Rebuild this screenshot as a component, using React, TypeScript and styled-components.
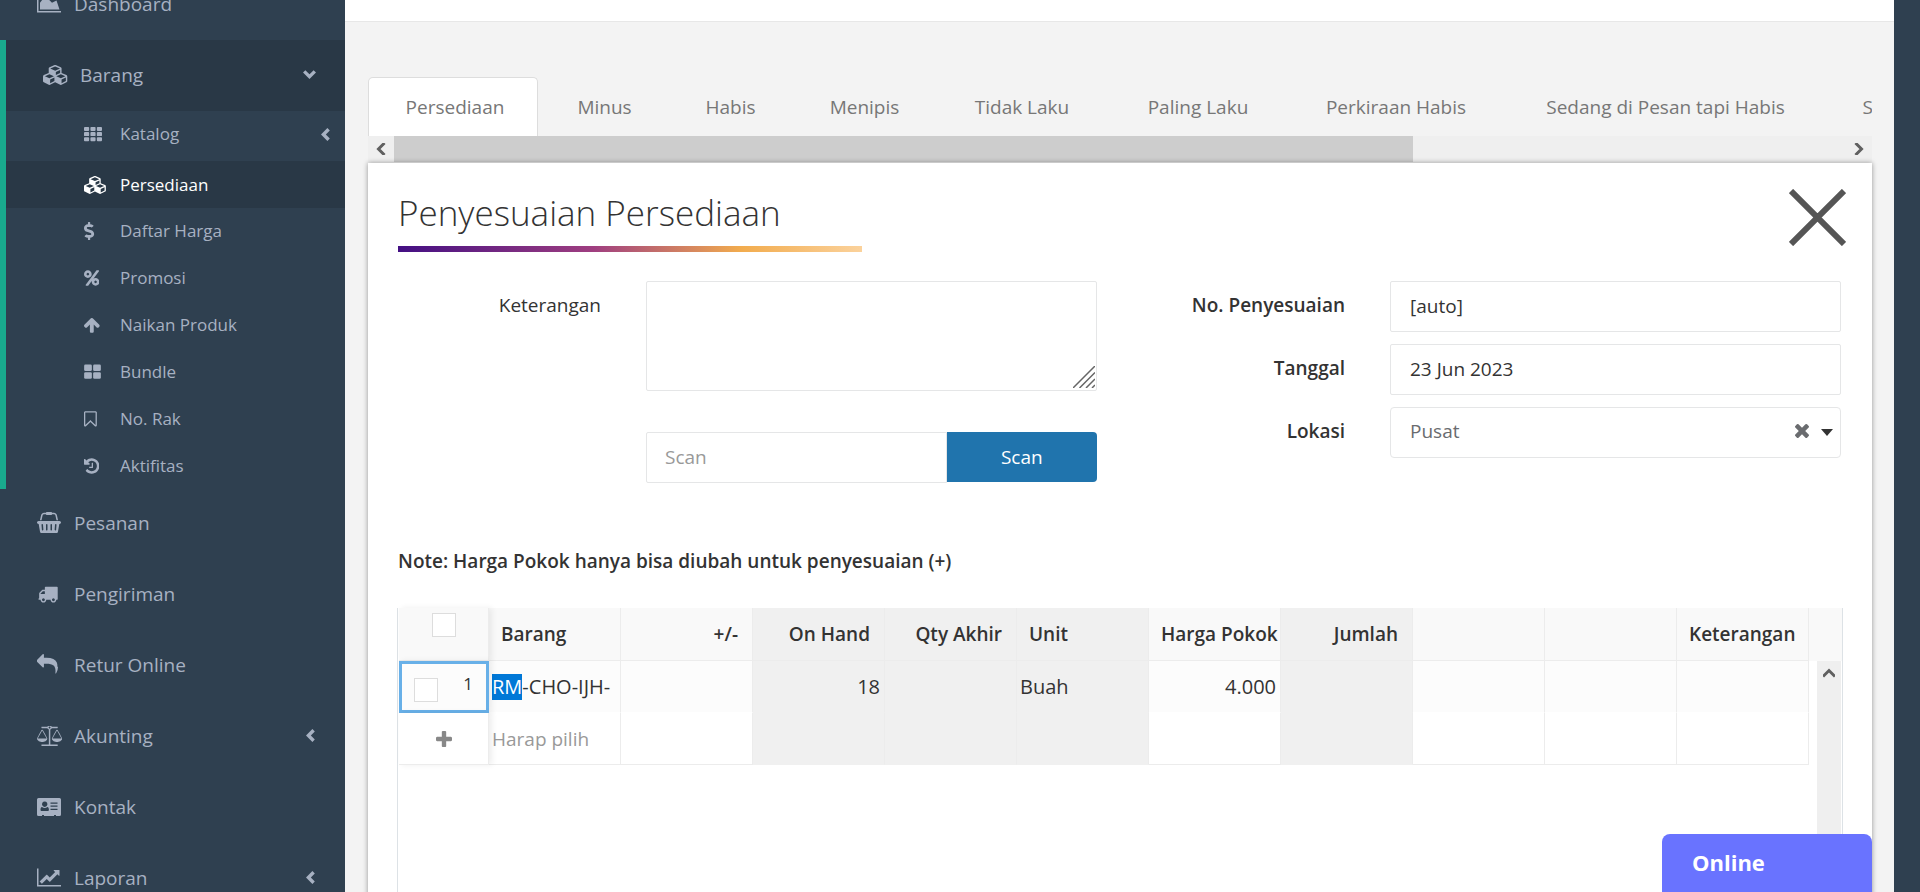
import React from 'react';
import styled, { createGlobalStyle, css } from 'styled-components';
import { FaDollarSign } from 'react-icons/fa';

const GlobalStyle = createGlobalStyle`
  *, *::before, *::after { box-sizing: border-box; }
  body { margin: 0; background: #2f4050; }
  body, button, input, textarea, select {
    font-family: "Open Sans", "Noto Sans", sans-serif;
    font-size: 19px;
    line-height: 26px;
    color: #333;
  }
  button { padding: 0; border: 0; background: none; cursor: pointer; }
  a { color: inherit; text-decoration: none; }
  ul { margin: 0; padding: 0; list-style: none; }
`;

/* ---------- icons ---------- */

type GlyphProps = { d: string; x?: number; y?: number; w: number; h?: number; size: number };
const Svg = styled.svg`
  display: block;
  flex: none;
  fill: currentColor;
`;
const Glyph = ({ d, x = 0, y = 0, w, h = 1792, size }: GlyphProps) => (
  <Svg viewBox={`${x} ${y} ${w} ${h}`} width={(w / h) * size} height={size} aria-hidden="true">
    <path d={d} />
  </Svg>
);

const CUBES =
  'M640 1632l384-192v-314l-384 164v342zm-64-454l404-173-404-173-404 173zm1088 454l384-192v-314l-384 164v342zm-64-454l404-173-404-173-404 173zm-448-293l384-165v-266l-384 164v267zm-64-379l441-189-441-189-441 189zm1088 518v416q0 36-19 67t-52 47l-448 224q-25 14-57 14t-57-14l-448-224q-4-2-7-4-2 2-7 4l-448 224q-25 14-57 14t-57-14l-448-224q-33-16-52-47t-19-67v-416q0-38 21.5-70t56.5-48l434-186v-400q0-38 21.5-70t56.5-48l448-192q23-10 50-10t50 10l448 192q35 16 56.5 48t21.5 70v400l434 186q36 16 57 48t21 70z';
const AREA = 'M2048 1536v128h-2048v-1536h128v1408h1920zM1664 640l256 768h-1664v-576l448-576 576 576z';
const LINE =
  'M2048 1536v128h-2048v-1536h128v1408h1920zm-128-1248v435q0 21-19.5 29t-35.5-8l-121-121-633 633q-10 10-23 10t-23-10l-233-233-416 416-192-192 585-585q10-10 23-10t23 10l233 233 464-464-121-121q-16-16-8-35.5t29-19.5h435q14 0 23 9t9 23z';
const PERCENT =
  'M1408 1280q0-52-38-90t-90-38-90 38-38 90 38 90 90 38 90-38 38-90zm-768-768q0-52-38-90t-90-38-90 38-38 90 38 90 90 38 90-38 38-90zm1024 768q0 159-112.5 271.5t-271.5 112.5-271.5-112.5-112.5-271.5 112.5-271.5 271.5-112.5 271.5 112.5 112.5 271.5zm-32-1088q0 20-13 38l-1056 1408q-19 26-51 26h-160q-26 0-45-19t-19-45q0-20 13-38l1056-1408q19-26 51-26h160q26 0 45 19t19 45zm-736 320q0 159-112.5 271.5t-271.5 112.5-271.5-112.5-112.5-271.5 112.5-271.5 271.5-112.5 271.5 112.5 112.5 271.5z';
const ARROW_UP =
  'M1675 971q0 51-37 90l-75 75q-38 38-91 38-54 0-90-38l-294-293v704q0 52-37.5 84.5t-90.5 32.5h-128q-53 0-90.5-32.5t-37.5-84.5v-704l-294 293q-36 38-90 38t-90-38l-75-75q-38-38-38-90 0-53 38-91l651-651q35-37 90-37 54 0 91 37l651 651q37 39 37 91z';
const BOOKMARK =
  'M1408 256h-1024v1242l423-406 89-85 89 85 423 406v-1242zm12-128q23 0 44 9 33 13 52.5 41t19.5 62v1289q0 34-19.5 62t-52.5 41q-19 8-44 8-48 0-83-32l-441-424-441 424q-36 33-83 33-23 0-44-9-33-13-52.5-41t-19.5-62v-1289q0-34 19.5-62t52.5-41q21-9 44-9h1048z';
const HISTORY =
  'M1664 896q0 156-61 298t-164 245-245 164-298 61q-172 0-327-72.5t-264-204.5q-7-10-6.5-22.5t8.5-20.5l137-138q10-9 25-9 16 2 23 12 73 95 179 147t225 52q104 0 198.5-40.5t163.5-109.5 109.5-163.5 40.5-198.5-40.5-198.5-109.5-163.5-163.5-109.5-198.5-40.5q-98 0-188 35.5t-160 101.5l137 138q31 30 14 69-17 40-59 40h-448q-26 0-45-19t-19-45v-448q0-42 40-59 39-17 69 14l130 129q107-101 244.5-156.5t284.5-55.5q156 0 298 61t245 164 164 245 61 298zm-640-288v448q0 14-9 23t-23 9h-320q-14 0-23-9t-9-23v-64q0-14 9-23t23-9h224v-352q0-14 9-23t23-9h64q14 0 23 9t9 23z';
const BASKET =
  'M1920 768q53 0 90.5 37.5t37.5 90.5-37.5 90.5-90.5 37.5h-15l-115 662q-8 46-44 76t-82 30h-1280q-46 0-82-30t-44-76l-115-662h-15q-53 0-90.5-37.5t-37.5-90.5 37.5-90.5 90.5-37.5h1792zm-1435 800q26-2 43.5-22.5t15.5-46.5l-32-416q-2-26-22.5-43.5t-46.5-15.5-43.5 22.5-15.5 46.5l32 416q2 25 20.5 42t43.5 17h5zm411-64v-416q0-26-19-45t-45-19-45 19-19 45v416q0 26 19 45t45 19 45-19 19-45zm384 0v-416q0-26-19-45t-45-19-45 19-19 45v416q0 26 19 45t45 19 45-19 19-45zm352 5l32-416q2-26-15.5-46.5t-43.5-22.5-46.5 15.5-22.5 43.5l-32 416q-2 26 15.5 46.5t43.5 22.5h5q25 0 43.5-17t20.5-42zm-1156-1217l-93 412h-132l101-441q19-88 89-143.5t160-55.5h167q0-26 19-45t45-19h384q26 0 45 19t19 45h167q90 0 160 55.5t89 143.5l101 441h-132l-93-412q-11-44-45.5-72t-79.5-28h-167q0 26-19 45t-45 19h-384q-26 0-45-19t-19-45h-167q-45 0-79.5 28t-45.5 72z';
const TRUCK =
  'M640 1408q0-52-38-90t-90-38-90 38-38 90 38 90 90 38 90-38 38-90zm-384-512h384v-256h-158q-13 0-22 9l-195 195q-9 9-9 22v30zm1280 512q0-52-38-90t-90-38-90 38-38 90 38 90 90 38 90-38 38-90zm256-1088v1024q0 15-4 26.5t-13.5 18.5-16.5 11.5-23.5 6-22.5 2-25.5 0-22.5-.5q0 106-75 181t-181 75-181-75-75-181h-384q0 106-75 181t-181 75-181-75-75-181h-64q-3 0-22.5.5t-25.5 0-22.5-2-23.5-6-16.5-11.5-13.5-18.5-4-26.5q0-26 19-45t45-19v-320q0-8-.5-35t0-38 2.5-34.5 6.5-37 14-30.5 22.5-30l198-198q19-19 50.5-32t58.5-13h160v-192q0-26 19-45t45-19h1024q26 0 45 19t19 45z';
const REPLY =
  'M1792 1120q0 166-127 451-3 7-10.5 24t-13.5 30-13 22q-12 17-28 17-15 0-23.5-10t-8.5-25q0-9 2.5-26.5t2.5-23.5q5-68 5-123 0-112-19.5-200.5t-54-153.5-89-112-115-78-142.5-47-161.5-24-181.5-7h-224v256q0 26-19 45t-45 19-45-19l-512-512q-19-19-19-45t19-45l512-512q19-19 45-19t45 19 19 45v256h224q713 0 875 403 53 134 53 333z';
const BALANCE =
  'M1728 576l-384 704h768zm-1280 0l-384 704h768zm821-192q-14 40-45.5 71.5t-71.5 45.5v1291h608q14 0 23 9t9 23v64q0 14-9 23t-23 9h-1344q-14 0-23-9t-9-23v-64q0-14 9-23t23-9h608v-1291q-40-14-71.5-45.5t-45.5-71.5h-491q-14 0-23-9t-9-23v-64q0-14 9-23t23-9h491q21-57 70-92.5t111-35.5 111 35.5 70 92.5h491q14 0 23 9t9 23v64q0 14-9 23t-23 9h-491zm-181 16q33 0 56.5-23.5t23.5-56.5-23.5-56.5-56.5-23.5-56.5 23.5-23.5 56.5 23.5 56.5 56.5 23.5zm1088 880q0 73-46.5 131t-117.5 91-144.5 49.5-139.5 16.5-139.5-16.5-144.5-49.5-117.5-91-46.5-131q0-11 35-81t92-174.5 107-195.5 102-184 56-100q18-33 56-33t56 33q4 7 56 100t102 184 107 195.5 92 174.5 35 81zm-1280 0q0 73-46.5 131t-117.5 91-144.5 49.5-139.5 16.5-139.5-16.5-144.5-49.5-117.5-91-46.5-131q0-11 35-81t92-174.5 107-195.5 102-184 56-100q18-33 56-33t56 33q4 7 56 100t102 184 107 195.5 92 174.5 35 81z';
const TIMES =
  'M1490 1322q0 40-28 68l-136 136q-28 28-68 28t-68-28l-294-294-294 294q-28 28-68 28t-68-28l-136-136q-28-28-28-68t28-68l294-294-294-294q-28-28-28-68t28-68l136-136q28-28 68-28t68 28l294 294 294-294q28-28 68-28t68 28l136 136q28 28 28 68t-28 68l-294 294 294 294q28 28 28 68z';
const PLUS =
  'M1600 736v192q0 40-28 68t-68 28h-416v416q0 40-28 68t-68 28h-192q-40 0-68-28t-28-68v-416h-416q-40 0-68-28t-28-68v-192q0-40 28-68t68-28h416v-416q0-40 28-68t68-28h192q40 0 68 28t28 68v416h416q40 0 68 28t28 68z';

const TilesIcon = () => (
  <Svg viewBox="0 0 1792 1792" width="18" height="18" aria-hidden="true">
    {[192, 704, 1216].map((y) =>
      [0, 640, 1280].map((x) => <rect key={`${x}-${y}`} x={x} y={y} width="512" height="400" rx="90" />),
    )}
  </Svg>
);
const LargeTilesIcon = () => (
  <Svg viewBox="0 0 1664 1792" width="17" height="18" aria-hidden="true">
    {[160, 928].map((y) => [0, 896].map((x) => <rect key={`${x}-${y}`} x={x} y={y} width="768" height="640" rx="128" />))}
  </Svg>
);
const CardIcon = () => (
  <Svg viewBox="0 0 24 18" width="24" height="18" aria-hidden="true">
    <path
      fillRule="evenodd"
      d="M1.5 0h21A1.5 1.5 0 0 1 24 1.500v15a1.500 1.500 0 0 1-1.500 1.500H19v-1h-2v1H7v-1H5v1H1.500A1.500 1.500 0 0 1 0 16.500v-15A1.500 1.500 0 0 1 1.500 0zM5 9C3.900 9 3.500 10.500 3.500 11.800c0 .8.500 1.300 1.200 1.300h6c.7 0 1.200-.5 1.200-1.300C11.900 10.500 11.500 9 10.400 9c-1.600 1.300-3.800 1.300-5.400 0zM7.700 3.400a2.700 2.800 0 1 0 .01 0zM13.500 4.500h7v1.200h-7zM13.500 7.600h7v1.200h-7zM13.500 10.800h7V12h-7z"
    />
  </Svg>
);

const Stroke = styled.svg`
  display: block;
  flex: none;
  fill: none;
  stroke: currentColor;
`;
const Chevron = ({ down }: { down?: boolean }) =>
  down ? (
    <Stroke viewBox="0 0 13 9" width="13" height="9" strokeWidth="3.400" aria-hidden="true">
      <path d="M1.200 1.400 6.500 6.600l5.300-5.200" />
    </Stroke>
  ) : (
    <Stroke viewBox="0 0 9 13" width="9" height="13" strokeWidth="3.400" aria-hidden="true">
      <path d="M7.600 1.200 2.400 6.500l5.200 5.300" />
    </Stroke>
  );
const ScrollArrow = styled(Stroke)<{ $turn: number }>`
  stroke: #606060;
  transform: rotate(${(p) => p.$turn}deg);
`;
const Arrow = ({ turn }: { turn: number }) => (
  <ScrollArrow $turn={turn} viewBox="0 0 12 12" width="12" height="12" strokeWidth="3" aria-hidden="true">
    <path d="M9.500 0 3.500 6l6 6" />
  </ScrollArrow>
);

/* ---------- page frame ---------- */

const Shell = styled.div`
  display: flex;
  height: 100vh;
  overflow: hidden;
  background: #2f4050;
`;
const Sidebar = styled.nav`
  flex: 0 0 345px;
  overflow: hidden;
  color: #a7b1c2;
`;
const Menu = styled.ul`
  margin-top: -31px;
`;
const MenuGroup = styled.li<{ $open?: boolean }>`
  ${(p) => p.$open && css`border-left: 6px solid #19aa8d;`}
`;
const MenuLink = styled.a<{ $open?: boolean }>`
  display: grid;
  grid-template-columns: 37px 1fr auto;
  align-items: center;
  height: 71px;
  padding: 0 30px 2px 37px;
  background: ${(p) => (p.$open ? '#293846' : 'transparent')};
  ${(p) => p.$open && css`padding-right: 29px;`}
`;
const SubMenu = styled.ul`
  display: grid;
  grid-template-rows: 50px 47px repeat(6, 1fr);
  height: 378px;
  margin-bottom: -1px;
`;
const SubLink = styled.a<{ $active?: boolean; $nested?: boolean }>`
  display: grid;
  grid-template-columns: 36px 1fr auto;
  align-items: center;
  height: 100%;
  padding: 0 15px ${(p) => (p.$nested ? 4 : 0)}px 78px;
  font-size: 17px;
  color: ${(p) => (p.$active ? '#fff' : 'inherit')};
  background: ${(p) => (p.$active ? '#293846' : 'transparent')};
`;
const Main = styled.main`
  flex: 1;
  min-width: 0;
  display: flex;
  flex-direction: column;
  margin-right: 26px;
  background: #f3f3f3;
`;
const TopBar = styled.header`
  flex: none;
  height: 22px;
  background: #fff;
  border-bottom: 1px solid #e7e7e7;
`;
const Content = styled.div`
  flex: 1;
  display: flex;
  flex-direction: column;
  padding: 55px 22px 0 23px;
`;

/* ---------- tabs ---------- */

const Tabs = styled.div`
  display: flex;
  flex: none;
  height: 59px;
  overflow: hidden;
`;
const Tab = styled.button<{ $width: number; $active?: boolean }>`
  flex: 0 0 ${(p) => p.$width}px;
  color: #777;
  white-space: nowrap;
  ${(p) =>
    p.$active &&
    css`
      margin-right: 3px;
      padding-left: 4px;
      background: #fff;
      border: 1px solid #ddd;
      border-bottom: 0;
      border-radius: 5px 5px 0 0;
    `}
`;
const TabScroll = styled.div`
  display: flex;
  flex: none;
  height: 26px;
  background: #efefef;
`;
const ScrollButton = styled.button`
  display: grid;
  flex: none;
  place-items: center;
  width: 26px;
`;
const ScrollTrack = styled.div`
  flex: 1;
  display: flex;
`;
const ScrollThumb = styled.div`
  width: 70.2%;
  background: #cdcdcd;
`;

/* ---------- panel ---------- */

const Panel = styled.section`
  flex: 1;
  margin-top: 1px;
  padding: 24px 31px 0 30px;
  background: #fff;
  box-shadow: 0 0 5px rgba(0, 0, 0, 0.4);
`;
const PanelHead = styled.div`
  display: flex;
  justify-content: space-between;
  align-items: flex-start;
  margin-bottom: 29px;
`;
const Title = styled.h1`
  width: 464px;
  margin: 0;
  font-size: 35px;
  font-weight: 300;
  line-height: 52px;
  &::after {
    content: '';
    display: block;
    height: 6px;
    margin-top: 7px;
    background: linear-gradient(90deg, #430f83 0%, #9f3e80 42%, #f2ac4e 74%, #fbd29c 100%);
  }
`;
const CloseButton = styled.button`
  margin: 2px -5px 0 0;
  color: #555;
`;
const Form = styled.form`
  display: grid;
  grid-template-columns: 1fr 1fr;
  column-gap: 45px;
`;
const FormColumn = styled.div<{ $gap: number }>`
  display: grid;
  grid-template-columns: 203fr 451fr;
  column-gap: 45px;
  row-gap: ${(p) => p.$gap}px;
  align-content: start;
`;
const Label = styled.label<{ $bold?: boolean }>`
  padding-top: 11px;
  text-align: right;
  font-weight: ${(p) => (p.$bold ? 600 : 400)};
`;
const field = css`
  width: 100%;
  min-width: 0;
  border: 1px solid #e5e6e7;
  border-radius: 2px;
  background: #fff;
  outline: none;
`;
const Input = styled.input`
  ${field}
  height: 51px;
  padding: 0 19px 2px;
  &::placeholder { color: #999; opacity: 1; }
`;
const AreaWrap = styled.div`
  position: relative;
  height: 110px;
`;
const TextArea = styled.textarea`
  ${field}
  display: block;
  height: 100%;
  padding: 12px 19px;
  resize: none;
`;
const Grip = styled(Stroke)`
  position: absolute;
  right: 2px;
  bottom: 3px;
  stroke: #666;
  pointer-events: none;
`;
const ScanRow = styled.div`
  grid-column: 2;
  display: grid;
  grid-template-columns: 2fr 1fr;
`;
const ScanInput = styled(Input)`
  padding: 0 18px 2px;
  border-radius: 2px 0 0 2px;
`;
const ScanButton = styled.button`
  height: 50px;
  color: #fff;
  background: #2074ad;
  border-radius: 0 4px 4px 0;
`;
const SelectBox = styled.div`
  ${field}
  display: flex;
  align-items: center;
  height: 51px;
  padding: 0 7px 4px 0;
  border-radius: 4px;
  color: #6a6c6f;
`;
const Select = styled.select`
  flex: 1;
  height: 100%;
  padding: 0 19px;
  border: 0;
  background: none;
  color: inherit;
  appearance: none;
  outline: none;
`;
const Caret = styled.span`
  margin: 4px 0 0 12px;
  border: 6px solid transparent;
  border-top: 7px solid #333;
  border-bottom: 0;
`;
const Note = styled.p`
  margin: 65px 0 34px;
  font-weight: 600;
`;

/* ---------- grid ---------- */

const GridFrame = styled.div`
  display: flex;
  min-height: 400px;
  margin: 0 -2px 0 -1px;
  padding-left: 1px;
  border: solid #dde2e6;
  border-width: 0 1px;
`;
const Table = styled.table`
  flex: 1;
  width: 0;
  align-self: flex-start;
  table-layout: fixed;
  border-collapse: separate;
  border-spacing: 0;
`;
type CellProps = { $locked?: boolean; $right?: boolean };
const cell = css<CellProps>`
  overflow: hidden;
  white-space: nowrap;
  text-align: ${(p) => (p.$right ? 'right' : 'left')};
  border-right: 1px solid #ececec;
`;
const HeadCell = styled.th<CellProps>`
  ${cell}
  height: 53px;
  padding: 0 ${(p) => (p.$right ? 14 : 0)}px 0 ${(p) => (p.$right ? 0 : 12)}px;
  font-weight: 600;
  border-bottom: 1px solid #ececec;
  background: ${(p) => (p.$locked ? '#f0f0f0' : '#f9f9f9')};
`;
const BodyRow = styled.tr<{ $current?: boolean }>`
  --row: ${(p) => (p.$current ? '#fcfcfc' : '#fff')};
  --line: ${(p) => (p.$current ? '#fff' : '#ececec')};
`;
const Cell = styled.td<CellProps>`
  ${cell}
  height: 52px;
  padding: 0 4px 0 3px;
  font-size: 20px;
  border-bottom: 1px solid ${(p) => (p.$locked ? '#f0f0f0' : 'var(--line)')};
  background: ${(p) => (p.$locked ? '#f0f0f0' : 'var(--row)')};
`;
const pinned = css`
  position: relative;
  width: 90px;
  box-shadow: 3px 0 6px rgba(0, 0, 0, 0.07);
`;
const HeadPin = styled(HeadCell)`
  ${pinned}
  padding: 0;
  text-align: center;
  vertical-align: top;
`;
const RowPin = styled(Cell)<{ $focus?: boolean }>`
  ${pinned}
  padding: 0;
  ${(p) => p.$focus && css`border: 3px solid #68b0e8;`}
`;
const RowTools = styled.div`
  display: flex;
  justify-content: space-between;
  padding: 0 13px 0 12px;
`;
const RowNumber = styled.span`
  font-size: 17px;
  line-height: 22px;
`;
const CheckBox = styled.input`
  appearance: none;
  display: inline-block;
  width: 24px;
  height: 24px;
  margin: 5px 0 0;
  border: 1px solid #ddd;
  background: #fff;
`;
const AddButton = styled.button`
  display: grid;
  place-items: center;
  width: 100%;
  color: #888;
`;
const Selected = styled.mark`
  display: inline-block;
  color: #fff;
  background: #0078d7;
`;
const CellInput = styled.input`
  display: block;
  width: 100%;
  padding: 0;
  border: 0;
  background: none;
  &::placeholder { color: #999; opacity: 1; }
`;
const GridSide = styled.div`
  flex: 0 0 33px;
  display: flex;
  flex-direction: column;
  align-items: flex-end;
  &::before {
    content: '';
    flex: 0 0 53px;
    width: 100%;
    background: #f9f9f9;
  }
`;
const SideScroll = styled.div`
  flex: 1;
  width: 24px;
  margin-right: 1px;
  padding-top: 6px;
  background: #efefef;
`;
const SideScrollButton = styled.button`
  display: grid;
  place-items: center;
  width: 100%;
`;

const ChatButton = styled.button`
  position: fixed;
  right: 48px;
  bottom: 0;
  width: 210px;
  height: 58px;
  padding: 0 30px 2px;
  border-radius: 8px 8px 0 0;
  background: #6973ff;
  color: #fff;
  font-size: 22px;
  font-weight: 700;
  text-align: left;
`;

/* ---------- data ---------- */

const tabs: [string, number][] = [
  ['Persediaan', 170],
  ['Minus', 127],
  ['Habis', 125],
  ['Menipis', 143],
  ['Tidak Laku', 172],
  ['Paling Laku', 180],
  ['Perkiraan Habis', 216],
  ['Sedang di Pesan tapi Habis', 323],
  ['Sedang di Pesan', 216],
];

const subItems: [string, React.ReactNode][] = [
  ['Katalog', <TilesIcon />],
  ['Persediaan', <Glyph d={CUBES} w={2304} size={18} />],
  ['Daftar Harga', <FaDollarSign size={18} preserveAspectRatio="xMinYMid" />],
  ['Promosi', <Glyph d={PERCENT} x={128} w={1536} size={18} />],
  ['Naikan Produk', <Glyph d={ARROW_UP} x={117} w={1558} size={18} />],
  ['Bundle', <LargeTilesIcon />],
  ['No. Rak', <Glyph d={BOOKMARK} x={256} w={1280} size={18} />],
  ['Aktifitas', <Glyph d={HISTORY} x={128} w={1536} size={18} />],
];

const lowerItems: [string, React.ReactNode, boolean][] = [
  ['Pesanan', <Glyph d={BASKET} w={2048} size={21} />, false],
  ['Pengiriman', <Glyph d={TRUCK} x={-64} w={1856} size={20} />, false],
  ['Retur Online', <Glyph d={REPLY} w={1792} size={21} />, false],
  ['Akunting', <Glyph d={BALANCE} y={192} h={1728} w={2176} size={20} />, true],
  ['Kontak', <CardIcon />, false],
  ['Laporan', <Glyph d={LINE} w={2048} size={21} />, true],
];

type Column = { name: string; locked?: boolean; right?: boolean; value?: React.ReactNode; next?: React.ReactNode };
const columns: Column[] = [
  {
    name: 'Barang',
    value: (
      <>
        <Selected>RM</Selected>-CHO-IJH-
      </>
    ),
    next: <CellInput placeholder="Harap pilih" aria-label="Barang" />,
  },
  { name: '+/-', right: true },
  { name: 'On Hand', right: true, locked: true, value: '18' },
  { name: 'Qty Akhir', right: true, locked: true },
  { name: 'Unit', locked: true, value: 'Buah' },
  { name: 'Harga Pokok', value: '4.000' },
  { name: 'Jumlah', right: true, locked: true },
  { name: '' },
  { name: '' },
  { name: 'Keterangan' },
];

export default function App() {
  return (
    <>
      <GlobalStyle />
      <Shell>
        <Sidebar>
          <Menu>
            <MenuGroup>
              <MenuLink href="#">
                <Glyph d={AREA} w={2048} size={21} />
                Dashboard
              </MenuLink>
            </MenuGroup>
            <MenuGroup $open>
              <MenuLink href="#" $open>
                <Glyph d={CUBES} w={2304} size={20} />
                Barang
                <Chevron down />
              </MenuLink>
              <SubMenu>
                {subItems.map(([name, icon], i) => (
                  <li key={name}>
                    <SubLink href="#" $active={name === 'Persediaan'} $nested={i === 0}>
                      {icon}
                      {name}
                      {i === 0 && <Chevron />}
                    </SubLink>
                  </li>
                ))}
              </SubMenu>
            </MenuGroup>
            {lowerItems.map(([name, icon, nested]) => (
              <MenuGroup key={name}>
                <MenuLink href="#">
                  {icon}
                  {name}
                  {nested && <Chevron />}
                </MenuLink>
              </MenuGroup>
            ))}
          </Menu>
        </Sidebar>

        <Main>
          <TopBar />
          <Content>
            <Tabs role="tablist">
              {tabs.map(([name, width], i) => (
                <Tab key={name} type="button" role="tab" aria-selected={i === 0} $width={width} $active={i === 0}>
                  {name}
                </Tab>
              ))}
            </Tabs>
            <TabScroll>
              <ScrollButton type="button" aria-label="Scroll left">
                <Arrow turn={0} />
              </ScrollButton>
              <ScrollTrack>
                <ScrollThumb />
              </ScrollTrack>
              <ScrollButton type="button" aria-label="Scroll right">
                <Arrow turn={180} />
              </ScrollButton>
            </TabScroll>

            <Panel>
              <PanelHead>
                <Title>Penyesuaian Persediaan</Title>
                <CloseButton type="button" aria-label="Close">
                  <Stroke viewBox="0 0 57 57" width="57" height="57" strokeWidth="6">
                    <path d="M2 2l53 53M55 2L2 55" />
                  </Stroke>
                </CloseButton>
              </PanelHead>

              <Form>
                <FormColumn $gap={41}>
                  <Label htmlFor="keterangan">Keterangan</Label>
                  <AreaWrap>
                    <TextArea id="keterangan" />
                    <Grip viewBox="0 0 22 22" width="22" height="22" strokeWidth="1.500" aria-hidden="true">
                      <path d="M0 22 22 0M6.500 22 22 6.500M13 22l9-9M19 22l3-3" />
                    </Grip>
                  </AreaWrap>
                  <ScanRow>
                    <ScanInput placeholder="Scan" aria-label="Scan" />
                    <ScanButton type="button">Scan</ScanButton>
                  </ScanRow>
                </FormColumn>
                <FormColumn $gap={12}>
                  <Label htmlFor="nomor" $bold>No. Penyesuaian</Label>
                  <Input id="nomor" defaultValue="[auto]" />
                  <Label htmlFor="tanggal" $bold>Tanggal</Label>
                  <Input id="tanggal" defaultValue="23 Jun 2023" />
                  <Label htmlFor="lokasi" $bold>Lokasi</Label>
                  <SelectBox>
                    <Select id="lokasi" defaultValue="Pusat">
                      <option>Pusat</option>
                    </Select>
                    <button type="button" aria-label="Clear">
                      <Svg viewBox="302 366 1188 1188" width="14" height="14" color="#6a6c6f">
                        <path d={TIMES} />
                      </Svg>
                    </button>
                    <Caret />
                  </SelectBox>
                </FormColumn>
              </Form>

              <Note>Note: Harga Pokok hanya bisa diubah untuk penyesuaian (+)</Note>

              <GridFrame>
                <Table>
                  <thead>
                    <tr>
                      <HeadPin>
                        <CheckBox type="checkbox" aria-label="Select all" />
                      </HeadPin>
                      {columns.map((c, i) => (
                        <HeadCell key={i} $locked={c.locked} $right={c.right}>
                          {c.name}
                        </HeadCell>
                      ))}
                    </tr>
                  </thead>
                  <tbody>
                    <BodyRow $current>
                      <RowPin $focus>
                        <RowTools>
                          <CheckBox type="checkbox" aria-label="Select row 1" />
                          <RowNumber>1</RowNumber>
                        </RowTools>
                      </RowPin>
                      {columns.map((c, i) => (
                        <Cell key={i} $locked={c.locked} $right={c.right || c.name === 'Harga Pokok'}>
                          {c.value}
                        </Cell>
                      ))}
                    </BodyRow>
                    <BodyRow>
                      <RowPin>
                        <AddButton type="button" aria-label="Add row">
                          <Svg viewBox="192 256 1408 1408" width="16" height="16">
                            <path d={PLUS} transform="translate(0 128)" />
                          </Svg>
                        </AddButton>
                      </RowPin>
                      {columns.map((c, i) => (
                        <Cell key={i} $locked={c.locked}>
                          {c.next}
                        </Cell>
                      ))}
                    </BodyRow>
                  </tbody>
                </Table>
                <GridSide>
                  <SideScroll>
                    <SideScrollButton type="button" aria-label="Scroll up">
                      <Arrow turn={90} />
                    </SideScrollButton>
                  </SideScroll>
                </GridSide>
              </GridFrame>
            </Panel>
          </Content>
        </Main>
      </Shell>
      <ChatButton type="button">Online</ChatButton>
    </>
  );
}
